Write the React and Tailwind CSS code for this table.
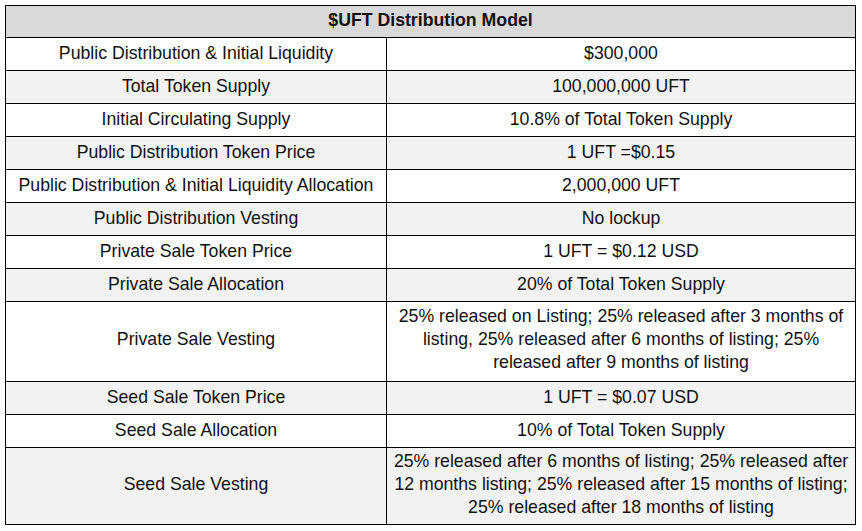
const ROWS = [
  { label: 'Public Distribution & Initial Liquidity', value: ['$300,000'] },
  { label: 'Total Token Supply', value: ['100,000,000 UFT'] },
  { label: 'Initial Circulating Supply', value: ['10.8% of Total Token Supply'] },
  { label: 'Public Distribution Token Price', value: ['1 UFT =$0.15'] },
  { label: 'Public Distribution & Initial Liquidity Allocation', value: ['2,000,000 UFT'] },
  { label: 'Public Distribution Vesting', value: ['No lockup'] },
  { label: 'Private Sale Token Price', value: ['1 UFT = $0.12 USD'] },
  { label: 'Private Sale Allocation', value: ['20% of Total Token Supply'] },
  {
    label: 'Private Sale Vesting',
    value: [
      '25% released on Listing; 25% released after 3 months of',
      'listing, 25% released after 6 months of listing; 25%',
      'released after 9 months of listing',
    ],
    tall: 'h-[80px] pb-[5px]',
  },
  { label: 'Seed Sale Token Price', value: ['1 UFT = $0.07 USD'] },
  { label: 'Seed Sale Allocation', value: ['10% of Total Token Supply'] },
  {
    label: 'Seed Sale Vesting',
    value: [
      '25% released after 6 months of listing; 25% released after',
      '12 months listing; 25% released after 15 months of listing;',
      '25% released after 18 months of listing',
    ],
    tall: 'h-[77px] pb-[3px]',
  },
];

export default function App() {
  return (
    <div className="w-[862px] h-[531px] bg-white pt-[5px] pl-[5px] font-['Liberation_Sans',Arial,sans-serif] text-[17.7px] text-[#111]">
      <table className="w-[851px] border-collapse table-fixed">
        <colgroup>
          <col className="w-[381px]" />
          <col />
        </colgroup>
        <thead>
          <tr className="bg-[#d9d9d9]">
            <th colSpan="2" className="h-[32px] border border-black px-0 pt-0 pb-[2px] text-center font-bold leading-[23px]">
              $UFT Distribution Model
            </th>
          </tr>
        </thead>
        <tbody>
          {ROWS.map((r, i) => {
            const cell = `${r.tall || 'h-[33px] pb-[2px]'} border border-black px-1 pt-0 text-center leading-[23px]`;
            return (
              <tr key={r.label} className={i % 2 === 0 ? 'bg-white' : 'bg-[#f2f2f2]'}>
                <td className={cell}>{r.label}</td>
                <td className={cell}>
                  {r.value.map((line, j) => (
                    <div key={j} className="whitespace-nowrap">{line}</div>
                  ))}
                </td>
              </tr>
            );
          })}
        </tbody>
      </table>
    </div>
  );
}
